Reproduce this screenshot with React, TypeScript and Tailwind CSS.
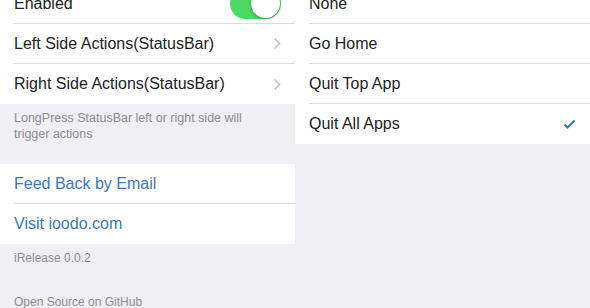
import { ReactNode } from "react";

const font = { fontFamily: '"Liberation Sans", Arial, sans-serif' };

const Chevron = () => (
    <svg width="8" height="13" viewBox="0 0 8 13" fill="none" className="shrink-0">
        <path d="M1.5 1.5L6.5 6.5L1.5 11.5" stroke="#c7c7cc" strokeWidth="1.6" />
    </svg>
);

const Check = () => (
    <svg width="13" height="10" viewBox="0 0 13 10" fill="none" className="shrink-0">
        <path d="M1.5 5.5L4.5 8.5L11.5 1.5" stroke="#3b76c4" strokeWidth="2" />
    </svg>
);

const Toggle = () => (
    <div className="relative w-[51px] h-[31px] rounded-full bg-[#4cd964] shrink-0">
        <div className="absolute right-[1px] top-[1px] w-[29px] h-[29px] rounded-full bg-white shadow-[0_1px_3px_rgba(0,0,0,0.3)]" />
    </div>
);

type RowProps = {
    children: ReactNode;
    right?: ReactNode;
    last?: boolean;
    blue?: boolean;
};

const Row = ({ children, right, last, blue }: RowProps) => (
    <div className="bg-white pl-[14px]">
        <div
            className={`h-[40px] flex items-center justify-between pr-[14px] ${last ? "" : "border-b border-[#dcdce0]"}`}
        >
            <span className={`text-[16px] ${blue ? "text-[#3a78c6]" : "text-[#222222]"}`}>{children}</span>
            {right}
        </div>
    </div>
);

export default function App() {
    return (
        <div className="w-[590px] h-[308px] overflow-hidden flex bg-[#efeff4]" style={font}>
            {/* Left: settings */}
            <div className="w-[295px] flex flex-col">
                <div className="-mt-[16px]">
                    <Row right={<Toggle />}>Enabled</Row>
                    <Row right={<Chevron />}>Left Side Actions(StatusBar)</Row>
                    <Row right={<Chevron />} last>
                        Right Side Actions(StatusBar)
                    </Row>
                </div>
                <p className="pl-[14px] pt-[6px] w-[262px] text-[12.5px] leading-[16px] text-[#8e8e93]">
                    LongPress StatusBar left or right side will trigger actions
                </p>
                <div className="mt-[22px]">
                    <Row blue>Feed Back by Email</Row>
                    <Row blue last>
                        Visit ioodo.com
                    </Row>
                </div>
                <p className="px-[14px] mt-[7px] text-[12px] leading-[15px] text-[#8e8e93]">iRelease 0.0.2</p>
                <p className="px-[14px] mt-[29px] text-[12px] leading-[15px] text-[#8e8e93]">Open Source on GitHub</p>
            </div>

            {/* Right: action picker */}
            <div className="w-[295px] flex flex-col">
                <div className="-mt-[16px]">
                    <Row>None</Row>
                    <Row>Go Home</Row>
                    <Row>Quit Top App</Row>
                    <Row right={<Check />} last>
                        Quit All Apps
                    </Row>
                </div>
            </div>
        </div>
    );
}
